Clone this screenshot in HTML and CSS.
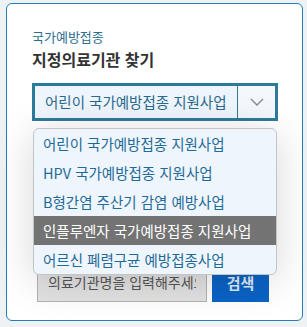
FILE: index.html
```html
<!DOCTYPE html>
<html lang="ko">
<head>
    <meta charset="UTF-8">
    <meta name="viewport" content="width=device-width, initial-scale=1.0">
    <title>지정의료기관 찾기</title>
    <link rel="stylesheet" href="styles.css">
</head>
<body>
    <div class="card">
        <p class="eyebrow">국가예방접종</p>
        <h2 class="title">지정의료기관 찾기</h2>

        <div class="select-wrap">
            <div class="select">
                <span class="select-value">어린이 국가예방접종 지원사업</span>
                <span class="select-arrow">
                    <svg width="14" height="8" viewBox="0 0 14 8"><path d="M1 1l6 6 6-6" fill="none" stroke="#888" stroke-width="1.4"/></svg>
                </span>
            </div>
            <ul class="options">
                <li>어린이 국가예방접종 지원사업</li>
                <li>HPV 국가예방접종 지원사업</li>
                <li>B형간염 주산기 감염 예방사업</li>
                <li class="active">인플루엔자 국가예방접종 지원사업</li>
                <li>어르신 폐렴구균 예방접종사업</li>
            </ul>
        </div>

        <div class="search-row">
            <input type="text" class="search-input" placeholder="의료기관명을 입력해주세요">
            <button class="search-btn">검색</button>
        </div>
    </div>
</body>
</html>
```

FILE: styles.css
```css
body {
    margin: 0;
    background: #eef2f5;
    font-family: "Noto Sans CJK KR", "Noto Sans", sans-serif;
}

.card {
    margin: 3px 4px 0 6px;
    height: 318px;
    box-sizing: border-box;
    padding: 24px 25px 0 25px;
    background: #fff;
    border: 1px solid #1f7fb6;
    border-radius: 6px;
}

.eyebrow {
    margin: 0;
    font-size: 13px;
    line-height: 18px;
    color: #2d6f8e;
}

.title {
    margin: 2px 0 0;
    font-size: 16px;
    font-weight: bold;
    line-height: 22px;
    color: #333;
}

.select-wrap {
    position: relative;
    margin-top: 13px;
    width: 246px;
}

.select {
    display: flex;
    height: 38px;
    box-sizing: border-box;
    border: 3px solid #2e7a9b;
    background: #eef5fc;
}

.select-value {
    flex: 1;
    padding-left: 10px;
    font-size: 14.5px;
    line-height: 32px;
    color: #2a6a8e;
    border-right: 1px solid #2e7a9b;
}

.select-arrow {
    width: 37px;
    display: flex;
    align-items: center;
    justify-content: center;
    background: #f4f7fb;
}

.options {
    position: absolute;
    top: 45px;
    left: 1px;
    right: 1px;
    margin: 0;
    padding: 0;
    list-style: none;
    background: #eef5fd;
    border: 1px solid #c4c4c4;
    border-radius: 6px;
    overflow: hidden;
    box-shadow: 0 6px 40px rgba(0, 0, 0, 0.16);
    z-index: 2;
}

.options li {
    height: 29px;
    padding-left: 9px;
    font-size: 14.5px;
    line-height: 29px;
    color: #1f6b98;
}

.options li.active {
    background: #737373;
    color: #fff;
}

.search-row {
    display: flex;
    gap: 5px;
    margin-top: 141px;
    padding-left: 5px;
}

.search-input {
    width: 170px;
    height: 40px;
    box-sizing: border-box;
    padding: 0 10px;
    border: 1px solid #b3b3b3;
    background: #e2e2e2;
    font-family: inherit;
    font-size: 14px;
    color: #555;
}

.search-input::placeholder {
    color: #555;
}

.search-btn {
    width: 57px;
    height: 40px;
    border: none;
    background: #0b63c5;
    color: #dfe9f5;
    font-family: inherit;
    font-size: 15px;
    font-weight: bold;
}
```
